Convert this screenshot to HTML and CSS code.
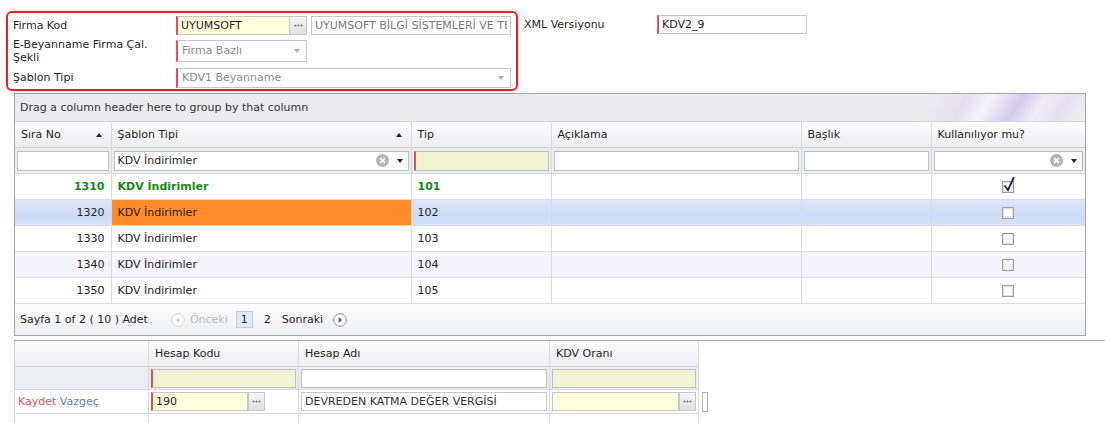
FILE: index.html
```html
<!DOCTYPE html>
<html lang="tr">
<head>
    <meta charset="UTF-8">
    <meta name="viewport" content="width=device-width, initial-scale=1.0">
    <title>KDV Beyanname Şablonları</title>
    <link rel="stylesheet" href="styles.css">
</head>
<body>
    <div class="top">
        <div class="filter-box">
            <label class="flabel">Firma Kod</label>
            <div class="fctl">
                <input class="inp req yellow w-code" type="text" value="UYUMSOFT" readonly>
                <span class="dots-btn"><svg width="9" height="3" viewBox="0 0 9 3"><circle cx="1.5" cy="1.5" r="1"/><circle cx="4.5" cy="1.5" r="1"/><circle cx="7.5" cy="1.5" r="1"/></svg></span>
                <input class="inp muted w-name" type="text" value="UYUMSOFT BİLGİ SİSTEMLERİ VE TEKNOLOJİLERİ A.Ş." readonly>
            </div>
            <label class="flabel">E-Beyanname Firma Çal. Şekli</label>
            <div class="fctl">
                <div class="sel req w-mode"><span>Firma Bazlı</span><i class="arrow grey"></i></div>
            </div>
            <label class="flabel">Şablon Tipi</label>
            <div class="fctl">
                <div class="sel req w-tpl"><span>KDV1 Beyanname</span><i class="arrow grey"></i></div>
            </div>
        </div>
        <div class="xml">
            <label class="xml-label">XML Versiyonu</label>
            <input class="inp req w-xml" type="text" value="KDV2_9" readonly>
        </div>
    </div>

    <div class="grid">
        <div class="group-panel">Drag a column header here to group by that column</div>
        <table>
            <colgroup>
                <col style="width:96px"><col style="width:300px"><col style="width:140px">
                <col style="width:250px"><col style="width:130px"><col style="width:154px">
            </colgroup>
            <thead>
                <tr class="head">
                    <th><div class="th-in"><span>Sıra No</span><i class="sort-up"></i></div></th>
                    <th><div class="th-in"><span>Şablon Tipi</span><i class="sort-up"></i></div></th>
                    <th>Tip</th>
                    <th>Açıklama</th>
                    <th>Başlık</th>
                    <th>Kullanılıyor mu?</th>
                </tr>
                <tr class="filter">
                    <td><input class="finp" type="text"></td>
                    <td>
                        <div class="combo">
                            <span class="combo-text">KDV İndirimler</span>
                            <svg class="clear" width="13" height="13" viewBox="0 0 13 13"><circle cx="6.5" cy="6.5" r="6.5" fill="#b5b5b5"/><path d="M4.2 4.2l4.6 4.6M8.8 4.2l-4.6 4.6" stroke="#fff" stroke-width="1.7"/></svg>
                            <i class="arrow"></i>
                        </div>
                    </td>
                    <td><input class="finp req green" type="text"></td>
                    <td><input class="finp" type="text"></td>
                    <td><input class="finp" type="text"></td>
                    <td>
                        <div class="combo">
                            <span class="combo-text"></span>
                            <svg class="clear" width="13" height="13" viewBox="0 0 13 13"><circle cx="6.5" cy="6.5" r="6.5" fill="#b5b5b5"/><path d="M4.2 4.2l4.6 4.6M8.8 4.2l-4.6 4.6" stroke="#fff" stroke-width="1.7"/></svg>
                            <i class="arrow"></i>
                        </div>
                    </td>
                </tr>
            </thead>
            <tbody>
                <tr class="row focused">
                    <td class="num">1310</td>
                    <td>KDV İndirimler</td>
                    <td>101</td>
                    <td></td>
                    <td></td>
                    <td class="center"><span class="chk"><svg class="tick" width="14" height="16" viewBox="0 0 14 16"><path d="M2.5 9.5l3.5 4.5L12 1" fill="none" stroke="#1f2240" stroke-width="1.8"/></svg></span></td>
                </tr>
                <tr class="row selected">
                    <td class="num">1320</td>
                    <td class="editing">KDV İndirimler</td>
                    <td>102</td>
                    <td></td>
                    <td></td>
                    <td class="center"><span class="chk"></span></td>
                </tr>
                <tr class="row">
                    <td class="num">1330</td>
                    <td>KDV İndirimler</td>
                    <td>103</td>
                    <td></td>
                    <td></td>
                    <td class="center"><span class="chk"></span></td>
                </tr>
                <tr class="row alt">
                    <td class="num">1340</td>
                    <td>KDV İndirimler</td>
                    <td>104</td>
                    <td></td>
                    <td></td>
                    <td class="center"><span class="chk"></span></td>
                </tr>
                <tr class="row">
                    <td class="num">1350</td>
                    <td>KDV İndirimler</td>
                    <td>105</td>
                    <td></td>
                    <td></td>
                    <td class="center"><span class="chk"></span></td>
                </tr>
            </tbody>
        </table>
        <div class="pager">
            <span class="summary">Sayfa 1 of 2 ( 10 ) Adet</span>
            <svg class="pg-icon" width="14" height="14" viewBox="0 0 14 14"><circle cx="7" cy="7" r="6.3" fill="#fff" stroke="#cfcfd4"/><path d="M8.3 4.3v5.4L5 7z" fill="#c8c8cc"/></svg>
            <span class="pg-disabled">Önceki</span>
            <span class="pg-current">1</span>
            <span class="pg-num">2</span>
            <span class="pg-link">Sonraki</span>
            <svg class="pg-icon" width="14" height="14" viewBox="0 0 14 14"><circle cx="7" cy="7" r="6.3" fill="#fff" stroke="#8a8a92"/><path d="M5.7 4.3v5.4L9 7z" fill="#555"/></svg>
        </div>
    </div>

    <div class="detail">
        <table>
            <colgroup>
                <col style="width:134px"><col style="width:150px"><col style="width:251px">
                <col style="width:149px"><col style="width:12px">
            </colgroup>
            <tr class="head">
                <th></th>
                <th>Hesap Kodu</th>
                <th>Hesap Adı</th>
                <th>KDV Oranı</th>
                <th class="blank"></th>
            </tr>
            <tr class="filter">
                <td></td>
                <td><input class="finp req green" type="text"></td>
                <td><input class="finp" type="text"></td>
                <td><input class="finp green" type="text"></td>
                <td class="blank"></td>
            </tr>
            <tr class="edit">
                <td><a class="lnk save" href="#">Kaydet</a> <a class="lnk cancel" href="#">Vazgeç</a></td>
                <td>
                    <div class="edit-field w-hk">
                        <input class="inp req yellow" type="text" value="190">
                        <span class="dots-btn"><svg width="9" height="3" viewBox="0 0 9 3"><circle cx="1.5" cy="1.5" r="1"/><circle cx="4.5" cy="1.5" r="1"/><circle cx="7.5" cy="1.5" r="1"/></svg></span>
                    </div>
                </td>
                <td><input class="inp full" type="text" value="DEVREDEN KATMA DEĞER VERGİSİ"></td>
                <td>
                    <div class="edit-field">
                        <input class="inp yellow" type="text">
                        <span class="dots-btn"><svg width="9" height="3" viewBox="0 0 9 3"><circle cx="1.5" cy="1.5" r="1"/><circle cx="4.5" cy="1.5" r="1"/><circle cx="7.5" cy="1.5" r="1"/></svg></span>
                    </div>
                </td>
                <td class="blank"><span class="stub"></span></td>
            </tr>
            <tr class="rest">
                <td></td><td></td><td></td><td></td><td class="blank"></td>
            </tr>
        </table>
    </div>
</body>
</html>
```

FILE: styles.css
```css
body {
    margin: 0;
    font-family: "DejaVu Sans", Verdana, sans-serif;
    font-size: 11px;
    color: #1f1f1f;
    background-color: #fff;
    overflow: hidden;
}
input {
    font: inherit;
}

/* ---- top filter ---- */
.top {
    display: flex;
    align-items: flex-start;
    padding: 11px 0 0 6px;
}
.filter-box {
    width: 512px;
    height: 80px;
    box-sizing: border-box;
    border: 2px solid #e2232b;
    border-radius: 6px;
    box-shadow: 0 0 4px rgba(0, 0, 0, 0.18);
    padding: 2px 5px 0 5px;
    display: grid;
    grid-template-columns: 163px 1fr;
    grid-template-rows: 20px 31px 23px;
    align-items: center;
}
.flabel {
    max-width: 155px;
    line-height: 13px;
}
.fctl {
    display: flex;
    align-items: center;
}
.inp {
    height: 19px;
    box-sizing: border-box;
    border: 1px solid #c6c6cc;
    padding: 0 3px;
    color: #1f1f1f;
    background-color: #fff;
    outline: none;
}
.inp.req {
    border-left: 2px solid #e0505a;
}
.inp.yellow {
    background-color: #ffffdc;
}
.inp.muted {
    color: #7a7a7a;
}
.w-code { width: 114px; }
.w-name { width: 200px; margin-left: 4px; }
.w-xml { width: 150px; }
.dots-btn {
    width: 17px;
    height: 19px;
    box-sizing: border-box;
    border: 1px solid #c6c6cc;
    border-left: none;
    background: linear-gradient(#f7f7f7, #e1e1e3);
    display: flex;
    align-items: center;
    justify-content: center;
    fill: #6b6b6b;
}
.sel {
    box-sizing: border-box;
    border: 1px solid #c6c6cc;
    border-left: 2px solid #e0505a;
    color: #8a8a8a;
    display: flex;
    align-items: center;
    justify-content: space-between;
    padding: 0 6px 0 4px;
    background-color: #fff;
}
.w-mode { width: 131px; height: 22px; }
.w-tpl { width: 335px; height: 20px; }
.arrow {
    width: 0;
    height: 0;
    border-left: 3.5px solid transparent;
    border-right: 3.5px solid transparent;
    border-top: 4px solid #222;
}
.arrow.grey {
    border-top-color: #b0b0b4;
}
.xml {
    display: flex;
    align-items: center;
    margin: 4px 0 0 6px;
}
.xml-label {
    width: 133px;
}

/* ---- main grid ---- */
.grid {
    margin: 2px 0 0 14px;
    width: 1072px;
    box-sizing: border-box;
    border: 1px solid #a6a6ae;
}
.group-panel {
    height: 27px;
    line-height: 27px;
    padding-left: 5px;
    border-bottom: 1px solid #d2d2d8;
    color: #333;
    background:
        linear-gradient(122deg, rgba(255,255,255,0) 25%, rgba(215,200,242,0.35) 42%, rgba(255,255,255,0.5) 52%, rgba(190,170,236,0.5) 66%, rgba(245,240,252,0.6) 76%, rgba(220,205,245,0.35) 86%, rgba(255,255,255,0) 96%) no-repeat right top / 210px 100%,
        #ebebef;
}
table {
    width: 100%;
    border-collapse: collapse;
    table-layout: fixed;
}
th, td {
    padding: 0 6px;
    border-right: 1px solid #d9d9df;
    border-bottom: 1px solid #d9d9df;
    white-space: nowrap;
    overflow: hidden;
}
th:last-child, td:last-child {
    border-right: none;
}
.head th {
    height: 25px;
    font-weight: normal;
    text-align: left;
    color: #222;
    background: linear-gradient(#fdfdfd, #ededf1);
    border-bottom-color: #cfcfd6;
}
.th-in {
    display: flex;
    align-items: center;
    justify-content: space-between;
}
.sort-up {
    width: 0;
    height: 0;
    margin-right: 3px;
    border-left: 3.5px solid transparent;
    border-right: 3.5px solid transparent;
    border-bottom: 4px solid #222;
}
.filter td {
    height: 25px;
    padding: 0 2px;
    background-color: #ecedf1;
}
.finp {
    display: block;
    width: 100%;
    height: 20px;
    box-sizing: border-box;
    border: 1px solid #bdbdc4;
    background-color: #fff;
    outline: none;
}
.finp.green {
    background-color: #f1f2d3;
}
.finp.req {
    border-left: 2px solid #e0505a;
}
.combo {
    height: 20px;
    box-sizing: border-box;
    border: 1px solid #bdbdc4;
    background-color: #fff;
    display: flex;
    align-items: center;
    padding: 0 5px 0 3px;
}
.combo-text {
    flex: 1;
}
.clear {
    margin-right: 8px;
}
.row td {
    height: 25px;
    color: #222;
}
.row.alt td {
    background-color: #f5f3fc;
}
.row.selected td {
    background: linear-gradient(#dde7fb, #cddbf7 60%, #d7e2f9);
}
.row.selected td.editing {
    background: #ff8b2b;
}
.row.focused td {
    color: #188a18;
    font-weight: bold;
}
.num {
    text-align: right;
}
.center {
    text-align: center;
}
.chk {
    display: inline-block;
    position: relative;
    width: 12px;
    height: 12px;
    box-sizing: border-box;
    border: 1px solid #9d9da8;
    background-color: #fff;
    box-shadow: inset 0 0 0 1px #e0e0e6;
    vertical-align: middle;
}
.tick {
    position: absolute;
    left: -1px;
    top: -6px;
}
.pager {
    height: 31px;
    display: flex;
    align-items: center;
    padding-left: 5px;
    background: linear-gradient(#fdfdfd, #eeeff3);
    color: #222;
}
.summary {
    margin-right: 23px;
}
.pg-icon {
    margin-right: 5px;
}
.pg-disabled {
    color: #b9b9be;
    margin-right: 8px;
}
.pg-current {
    padding: 1px 4px;
    border: 1px solid #b9cbe9;
    background-color: #dfe9f8;
    margin-right: 11px;
}
.pg-num {
    margin-right: 11px;
}
.pg-link {
    margin-right: 10px;
}

/* ---- detail grid ---- */
.detail {
    margin: 4px 0 0 14px;
    border-top: 1px solid #a6a6ae;
}
.detail table {
    width: 696px;
    border-left: 1px solid #cfcfd6;
}
.detail .head th {
    height: 25px;
}
.detail .filter td {
    height: 22px;
    padding: 0 2px;
}
.detail .filter .finp {
    height: 19px;
}
.detail th.blank, .detail td.blank {
    background: #fff;
    border: none;
    padding: 0 3px;
}
.edit td {
    height: 23px;
    padding: 0 2px;
}
.lnk {
    text-decoration: none;
}
.save {
    color: #e5525c;
    margin-left: 1px;
}
.cancel {
    color: #6b7ab6;
}
.edit-field {
    display: flex;
}
.edit-field .inp {
    flex: 1;
    min-width: 0;
}
.edit-field .dots-btn {
    border-left: 1px solid #c6c6cc;
}
.w-hk {
    width: 114px;
}
.inp.full {
    width: 100%;
    color: #333;
}
.stub {
    display: block;
    width: 6px;
    height: 20px;
    box-sizing: border-box;
    border: 1px solid #b0b0b8;
}
.rest td {
    height: 12px;
}
```
